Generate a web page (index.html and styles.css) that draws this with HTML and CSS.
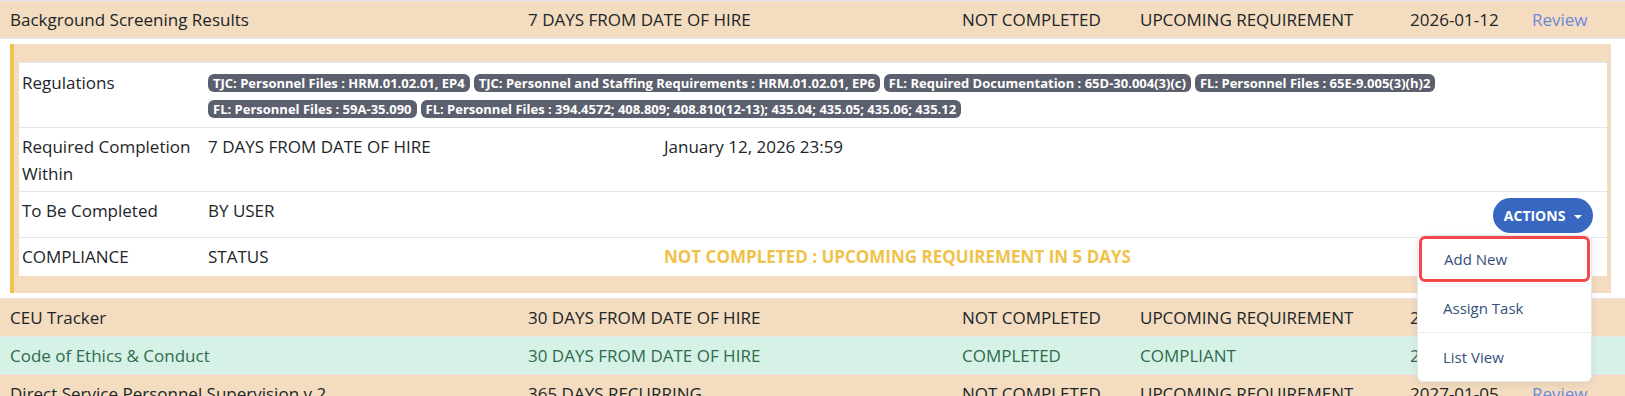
FILE: index.html
```html
<!DOCTYPE html>
<html lang="en">
<head>
    <meta charset="UTF-8">
    <meta name="viewport" content="width=device-width, initial-scale=1.0">
    <title>Requirements</title>
    <link rel="stylesheet" href="styles.css">
</head>
<body>

    <div class="records">
        <div class="record pending">
            <span>Background Screening Results</span>
            <span>7 DAYS FROM DATE OF HIRE</span>
            <span>NOT COMPLETED</span>
            <span>UPCOMING REQUIREMENT</span>
            <span>2026-01-12</span>
            <a class="review" href="#">Review</a>
        </div>

        <div class="record-detail">
            <div class="detail-panel">
                <div class="detail-table">
                    <div class="detail-row">
                        <div class="cell">Regulations</div>
                        <div class="badges">
                            <span class="badge">TJC: Personnel Files : HRM.01.02.01, EP4</span>
                            <span class="badge">TJC: Personnel and Staffing Requirements : HRM.01.02.01, EP6</span>
                            <span class="badge">FL: Required Documentation : 65D-30.004(3)(c)</span>
                            <span class="badge">FL: Personnel Files : 65E-9.005(3)(h)2</span>
                            <span class="badge">FL: Personnel Files : 59A-35.090</span>
                            <span class="badge">FL: Personnel Files : 394.4572; 408.809; 408.810(12-13); 435.04; 435.05; 435.06; 435.12</span>
                        </div>
                    </div>
                    <div class="detail-row">
                        <div class="cell">Required Completion Within</div>
                        <div class="cell">7 DAYS FROM DATE OF HIRE</div>
                        <div class="cell">January 12, 2026 23:59</div>
                    </div>
                    <div class="detail-row">
                        <div class="cell">To Be Completed</div>
                        <div class="cell">BY USER</div>
                        <div class="cell actions-cell">
                            <div class="actions">
                                <button class="actions-button">ACTIONS <span class="caret"></span></button>
                                <div class="actions-menu">
                                    <a class="menu-item active" href="#">Add New</a>
                                    <a class="menu-item" href="#">Assign Task</a>
                                    <a class="menu-item" href="#">List View</a>
                                </div>
                            </div>
                        </div>
                    </div>
                    <div class="detail-row">
                        <div class="cell">COMPLIANCE</div>
                        <div class="cell">STATUS</div>
                        <div class="cell status-note">NOT COMPLETED : UPCOMING REQUIREMENT IN 5 DAYS</div>
                    </div>
                </div>
            </div>
        </div>

        <div class="record pending">
            <span>CEU Tracker</span>
            <span>30 DAYS FROM DATE OF HIRE</span>
            <span>NOT COMPLETED</span>
            <span>UPCOMING REQUIREMENT</span>
            <span>2026-02-04</span>
            <a class="review" href="#">Review</a>
        </div>
        <div class="record done">
            <span>Code of Ethics &amp; Conduct</span>
            <span>30 DAYS FROM DATE OF HIRE</span>
            <span>COMPLETED</span>
            <span>COMPLIANT</span>
            <span>2026-01-09</span>
            <a class="review" href="#">Review</a>
        </div>
        <div class="record pending">
            <span>Direct Service Personnel Supervision v.2</span>
            <span>365 DAYS RECURRING</span>
            <span>NOT COMPLETED</span>
            <span>UPCOMING REQUIREMENT</span>
            <span>2027-01-05</span>
            <a class="review" href="#">Review</a>
        </div>
    </div>

</body>
</html>
```

FILE: styles.css
```css
body {
    margin: 0;
    font-family: "Open Sans", sans-serif;
    font-size: 17px;
    line-height: 27px;
    color: #212529;
    background-color: #ffffff;
}
.records {
    width: 1625px;
}
.record {
    display: grid;
    grid-template-columns: 518px 434px 178px 270px 122px 1fr;
    padding: 5px 0 5px 10px;
    border-top: 1px solid #e3e4ec;
    white-space: nowrap;
}
.pending {
    background-color: #f3dcbf;
}
.done {
    background-color: #d6f2e6;
    color: #2f6b4e;
}
.review {
    color: #6f87dc;
    text-decoration: none;
}
.record-detail {
    border-top: 1px solid #e3e4ec;
    padding: 5px 14px 5px 10px;
}
.detail-panel {
    background-color: #f3dcbf;
    border-left: 4px solid #f0c24a;
    padding: 18px 4px 17px 5px;
}
.detail-table {
    background-color: #ffffff;
    border-top: 1px solid #e3e4ec;
}
.detail-row {
    display: grid;
    grid-template-columns: 186px 456px 1fr;
    border-bottom: 1px solid #e3e4ec;
}
.detail-row:last-child {
    border-bottom: none;
}
.cell {
    padding: 5px 2px 4px 3px;
}
.detail-row:first-child .cell {
    padding-top: 6px;
}
.detail-row:last-child .cell {
    padding-bottom: 6px;
}
.badges {
    grid-column: 2 / 4;
    display: flex;
    flex-wrap: wrap;
    align-content: flex-start;
    gap: 8px 4px;
    padding: 11px 0 9px 3px;
}
.badge {
    background-color: #5c5f6d;
    color: #ffffff;
    font-weight: 700;
    font-size: 13px;
    line-height: 18px;
    height: 18px;
    padding: 0 5px;
    border-radius: 6px;
    white-space: nowrap;
}
.status-note {
    color: #f0c24a;
    font-weight: 700;
}
.actions-cell {
    text-align: right;
    padding-right: 14px;
}
.actions {
    position: relative;
    display: inline-block;
}
.actions-button {
    height: 35px;
    padding: 0 11px;
    margin-top: 1px;
    border: none;
    border-radius: 18px;
    background-color: #3767c1;
    color: #ffffff;
    font-family: "Open Sans", sans-serif;
    font-size: 14px;
    font-weight: 700;
    cursor: pointer;
}
.caret {
    display: inline-block;
    margin-left: 5px;
    vertical-align: middle;
    border-top: 4px solid #ffffff;
    border-left: 4px solid transparent;
    border-right: 4px solid transparent;
}
.actions-menu {
    position: absolute;
    z-index: 10;
    top: calc(100% + 2px);
    right: 1px;
    width: 175px;
    box-sizing: border-box;
    background-color: #ffffff;
    border: 1px solid #e6e8f0;
    border-radius: 6px;
    box-shadow: 0 2px 8px rgba(0, 0, 0, 0.08);
    text-align: left;
}
.menu-item {
    display: block;
    box-sizing: border-box;
    height: 49px;
    line-height: 48px;
    padding-left: 25px;
    border-top: 1px solid #eceef4;
    color: #34507a;
    font-size: 15px;
    text-decoration: none;
}
.menu-item.active {
    height: 46px;
    line-height: 40px;
    margin: 0 1px 1px;
    padding-left: 22px;
    border: 3px solid #f24848;
    border-radius: 6px;
}
```
